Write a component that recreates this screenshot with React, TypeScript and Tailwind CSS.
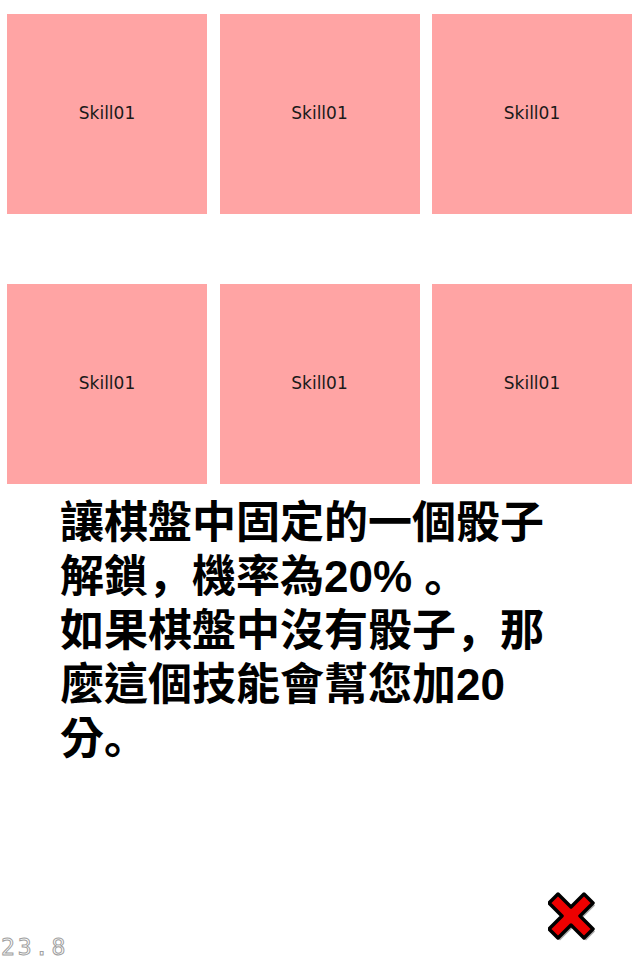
import React from "react";

const Tile = () => (
  <div className="flex h-[200px] w-[200px] items-center justify-center bg-[#ffa4a4]">
    <span className="font-['DejaVu_Sans',sans-serif] text-[17px] text-[#1a1a1a]">Skill01</span>
  </div>
);

const P = ({ children }: { children: React.ReactNode }) => (
  <span className="font-['Noto_Sans_CJK_SC',sans-serif] leading-none">{children}</span>
);

export default function App() {
  return (
    <div className="relative h-[960px] w-[640px] overflow-hidden bg-white">
      <div className="flex flex-col gap-[70px] pl-[7px] pt-[14px]">
        <div className="flex gap-[12.5px]">
          <Tile />
          <Tile />
          <Tile />
        </div>
        <div className="flex gap-[12.5px]">
          <Tile />
          <Tile />
          <Tile />
        </div>
      </div>
      <div className="mt-[12px] pl-[60px] font-['Liberation_Sans','Noto_Sans_CJK_TC',sans-serif] text-[44px] font-bold leading-[54px] text-black">
        <div className="h-[54px] whitespace-nowrap">讓棋盤中固定的一個骰子</div>
        <div className="h-[54px] whitespace-nowrap">
          解鎖<P>，</P>機率為20% <P>。</P>
        </div>
        <div className="h-[54px] whitespace-nowrap">
          如果棋盤中沒有骰子<P>，</P>那
        </div>
        <div className="h-[54px] whitespace-nowrap">麼這個技能會幫您加20</div>
        <div className="h-[54px] whitespace-nowrap">
          分<P>。</P>
        </div>
      </div>
      <div className="absolute bottom-[1px] left-[1px] font-['DejaVu_Sans_Mono',monospace] text-[23px] leading-none tracking-[3px] text-white [-webkit-text-stroke:1px_#a0a0a0]">
        23.8
      </div>
      <svg className="absolute left-[548px] top-[891px]" width="50" height="50" viewBox="0 0 50 50">
        <g transform="translate(2 2.5)">
          <polygon
            points="10,3 23,16 36,3 45,12 32,25 45,38 36,47 23,34 10,47 1,38 14,25 1,12"
            fill="#555"
            opacity="0.5"
          />
        </g>
        <polygon
          points="10,3 23,16 36,3 45,12 32,25 45,38 36,47 23,34 10,47 1,38 14,25 1,12"
          fill="#ee0000"
          stroke="#000"
          strokeWidth="3.5"
          strokeLinejoin="round"
        />
      </svg>
    </div>
  );
}
